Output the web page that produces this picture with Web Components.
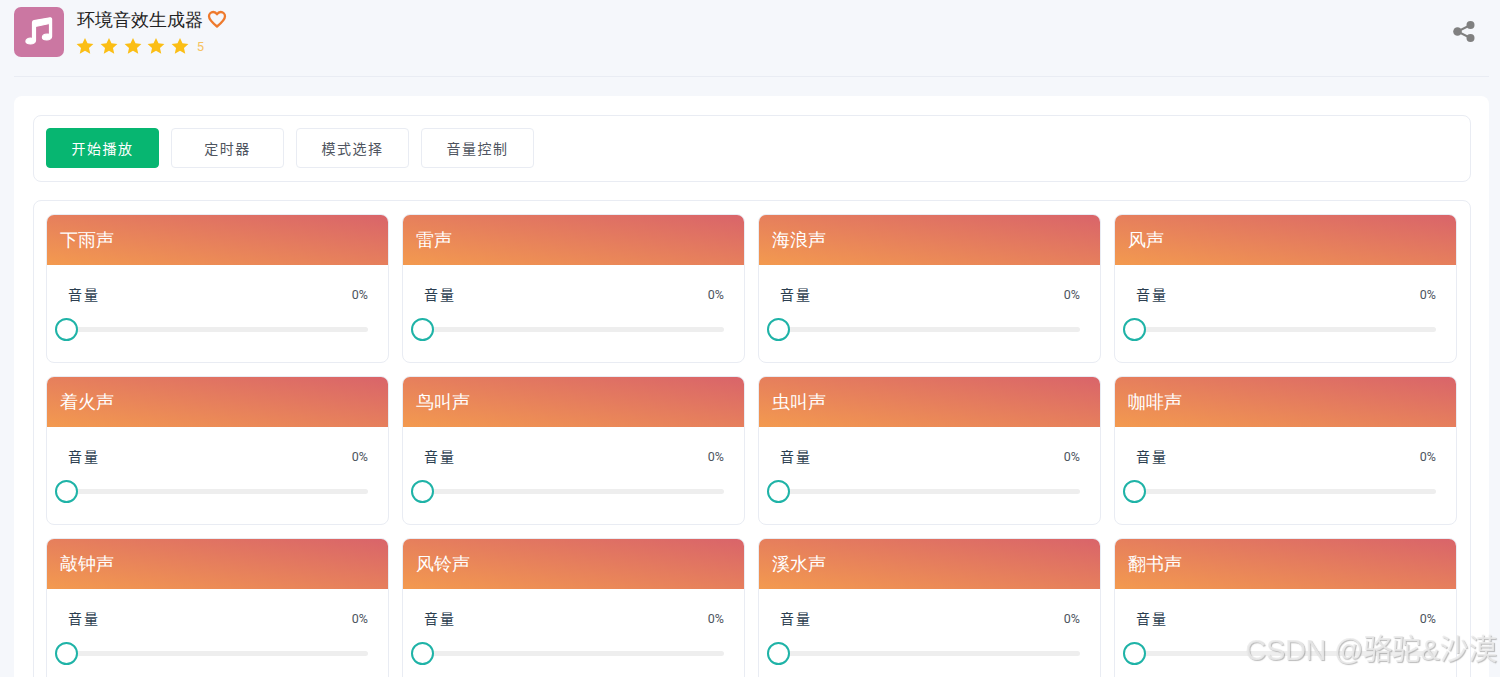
<!DOCTYPE html>
<html lang="zh">
<head>
<meta charset="utf-8">
<title>环境音效生成器</title>
<style>
    html, body { margin: 0; height: 677px; overflow: hidden; }
    body {
        background: #f5f7fb;
        font-family: "Liberation Sans", "Noto Sans CJK SC", sans-serif;
        color: #303133;
    }
</style>
</head>
<body>
<app-header title="环境音效生成器" rating="5"></app-header>
<main-panel>
    <tool-bar>
        <tool-button primary>开始播放</tool-button>
        <tool-button>定时器</tool-button>
        <tool-button>模式选择</tool-button>
        <tool-button>音量控制</tool-button>
    </tool-bar>
    <sound-grid>
        <sound-card name="下雨声"></sound-card>
        <sound-card name="雷声"></sound-card>
        <sound-card name="海浪声"></sound-card>
        <sound-card name="风声"></sound-card>
        <sound-card name="着火声"></sound-card>
        <sound-card name="鸟叫声"></sound-card>
        <sound-card name="虫叫声"></sound-card>
        <sound-card name="咖啡声"></sound-card>
        <sound-card name="敲钟声"></sound-card>
        <sound-card name="风铃声"></sound-card>
        <sound-card name="溪水声"></sound-card>
        <sound-card name="翻书声"></sound-card>
    </sound-grid>
</main-panel>
<water-mark>CSDN @骆驼&amp;沙漠</water-mark>

<script>
const STAR = '<svg width="18" height="18" viewBox="0 0 24 24"><path fill="#fbbe15" d="M12 1.2l3.3 7.2 7.9.9-5.900 5.300 1.700 7.800L12 18.400l-7 4 1.700-7.800L.8 9.300l7.900-.9z"/></svg>';

class AppHeader extends HTMLElement {
    connectedCallback() {
        this.attachShadow({ mode: 'open' });
        const rating = Number(this.getAttribute('rating'));
        this.shadowRoot.innerHTML = `
            <style>
                :host {
                    display: flex;
                    align-items: flex-start;
                    margin: 0 11px 19px 14px;
                    padding: 7px 0 19px;
                    height: 50px;
                    border-bottom: 1px solid #e9ecf3;
                }
                .logo {
                    width: 50px;
                    height: 50px;
                    border-radius: 7px;
                    background: #cb77a2;
                    margin-right: 13px;
                }
                .logo svg { display: block; }
                .info { flex: 1; }
                .title {
                    display: flex;
                    align-items: center;
                    gap: 5px;
                    height: 25px;
                    font: 18px "Liberation Serif", serif;
                    color: #222;
                }
                .title svg { margin: -1px 0 0 -1px; }
                .stars {
                    display: flex;
                    align-items: center;
                    gap: 5.75px;
                    height: 26px;
                    margin: 1px 0 0 -1px;
                }
                .stars svg { display: block; }
                .count { font: 13px Roboto, sans-serif; color: #f6c260; margin-left: 2px; }
                .share { margin: 12.5px 13px 0 0; display: block; }
            </style>
            <div class="logo">
                <svg width="50" height="50" viewBox="0 0 50 50">
                    <path fill="#fff" stroke="#fff" stroke-width="1.200" stroke-linejoin="round" d="M18.500 15.500c0-1 .6-1.700 1.600-1.900L36 10.800c1.200-.2 1.600.4 1.600 1.500V29.500c0 2-2.300 3.500-4.800 3.500-2.700 0-4.400-1-4.400-2.700 0-1.900 2.100-3.300 4.800-3.300.9 0 1.700.1 2.300.4V16.500L21.500 19.500V33.500c0 2-2.300 3.500-5 3.500-2.700 0-4.600-1-4.600-2.700 0-1.900 2.200-3.300 4.700-3.300.8 0 1.400.1 1.900.4z"/>
                </svg>
            </div>
            <div class="info">
                <div class="title">
                    <span>${this.getAttribute('title')}</span>
                    <svg width="20" height="20" viewBox="0 0 20 20"><path fill="none" stroke="#ee7a2d" stroke-width="2.300" stroke-linejoin="round" d="M10 17.500C5 13.500 2 10.800 2 7.300 2 4.800 4 3 6.200 3 7.800 3 9.200 3.800 10 5.200 10.800 3.800 12.200 3 13.800 3 16 3 18 4.800 18 7.300c0 3.500-3 6.200-8 10.200z"/></svg>
                </div>
                <div class="stars">
                    ${STAR.repeat(rating)}
                    <span class="count">${rating}</span>
                </div>
            </div>
            <svg class="share" width="24" height="24" viewBox="0 0 24 24">
                <g fill="#808080">
                    <circle cx="18.500" cy="5" r="4"/>
                    <circle cx="5.500" cy="11.500" r="4.300"/>
                    <circle cx="18.500" cy="18" r="4"/>
                </g>
                <path fill="none" stroke="#808080" stroke-width="2" d="M18.500 5L5.500 11.500l13 6.500"/>
            </svg>
        `;
    }
}

class MainPanel extends HTMLElement {
    connectedCallback() {
        this.attachShadow({ mode: 'open' });
        this.shadowRoot.innerHTML = `
            <style>
                :host {
                    display: block;
                    margin: 0 11px 0 14px;
                    padding: 19px 18px 19px 19px;
                    background: #fff;
                    border-radius: 8px;
                }
            </style>
            <slot></slot>
        `;
    }
}

class ToolBar extends HTMLElement {
    connectedCallback() {
        this.attachShadow({ mode: 'open' });
        this.shadowRoot.innerHTML = `
            <style>
                :host {
                    display: flex;
                    gap: 12px;
                    padding: 12px 12px 13px;
                    margin-bottom: 18px;
                    border: 1px solid #e9ecf3;
                    border-radius: 8px;
                }
            </style>
            <slot></slot>
        `;
    }
}

class ToolButton extends HTMLElement {
    connectedCallback() {
        this.attachShadow({ mode: 'open' });
        this.shadowRoot.innerHTML = `
            <style>
                :host {
                    display: flex;
                    align-items: center;
                    justify-content: center;
                    box-sizing: border-box;
                    width: 113px;
                    height: 40px;
                    border: 1px solid #e9ecf3;
                    border-radius: 4px;
                    background: #fff;
                    color: #4f5560;
                    font-size: 14px;
                    letter-spacing: 1.500px;
                }
                :host([primary]) {
                    background: #07b671;
                    border-color: #07b671;
                    color: #fff;
                }
            </style>
            <slot></slot>
        `;
    }
}

class SoundGrid extends HTMLElement {
    connectedCallback() {
        this.attachShadow({ mode: 'open' });
        this.shadowRoot.innerHTML = `
            <style>
                :host {
                    display: grid;
                    grid-template-columns: repeat(4, 1fr);
                    gap: 13px;
                    padding: 13px 13px 13px 12px;
                    border: 1px solid #e9ecf3;
                    border-radius: 8px;
                }
            </style>
            <slot></slot>
        `;
    }
}

class SoundCard extends HTMLElement {
    connectedCallback() {
        this.attachShadow({ mode: 'open' });
        const value = Number(this.getAttribute('value') || 0);
        this.shadowRoot.innerHTML = `
            <style>
                :host {
                    display: block;
                    border: 1px solid #e9ecf3;
                    border-radius: 8px;
                    overflow: hidden;
                    background: #fff;
                }
                .head {
                    display: flex;
                    align-items: center;
                    height: 50px;
                    padding-left: 13px;
                    background: linear-gradient(to top right, #f39a4f, #d9646a);
                    color: #fff;
                    font: 18px "Liberation Serif", serif;
                }
                .body { height: 97px; padding: 0 20px 0 21px; }
                .row {
                    display: flex;
                    justify-content: space-between;
                    align-items: center;
                    height: 20px;
                    padding-top: 19px;
                    font-size: 14px;
                    color: #2c3e50;
                }
                .label { letter-spacing: 2px; }
                .pct { font: 12.5px Roboto, sans-serif; color: #4d5560; padding-top: 1px; }
                .track {
                    position: relative;
                    height: 5px;
                    margin-top: 23px;
                    border-radius: 3px;
                    background: #eeeeee;
                }
                .thumb {
                    position: absolute;
                    left: -13px;
                    top: -9px;
                    box-sizing: border-box;
                    width: 23px;
                    height: 23px;
                    border: 2.500px solid #1fb3a7;
                    border-radius: 50%;
                    background: #fff;
                }
            </style>
            <div class="head">${this.getAttribute('name')}</div>
            <div class="body">
                <div class="row"><span class="label">音量</span><span class="pct">${value}%</span></div>
                <div class="track"><div class="thumb"></div></div>
            </div>
        `;
    }
}

class WaterMark extends HTMLElement {
    connectedCallback() {
        this.attachShadow({ mode: 'open' });
        this.shadowRoot.innerHTML = `
            <style>
                :host {
                    position: fixed;
                    right: 3px;
                    top: 631px;
                    font-size: 29px;
                    letter-spacing: -0.300px;
                    line-height: 38px;
                    color: rgba(235, 235, 235, 0.85);
                    text-shadow: 1px 1px 1px rgba(120, 120, 120, 0.5);
                    white-space: nowrap;
                }
            </style>
            <slot></slot>
        `;
    }
}

customElements.define('app-header', AppHeader);
customElements.define('main-panel', MainPanel);
customElements.define('tool-bar', ToolBar);
customElements.define('tool-button', ToolButton);
customElements.define('sound-grid', SoundGrid);
customElements.define('sound-card', SoundCard);
customElements.define('water-mark', WaterMark);
</script>
</body>
</html>
